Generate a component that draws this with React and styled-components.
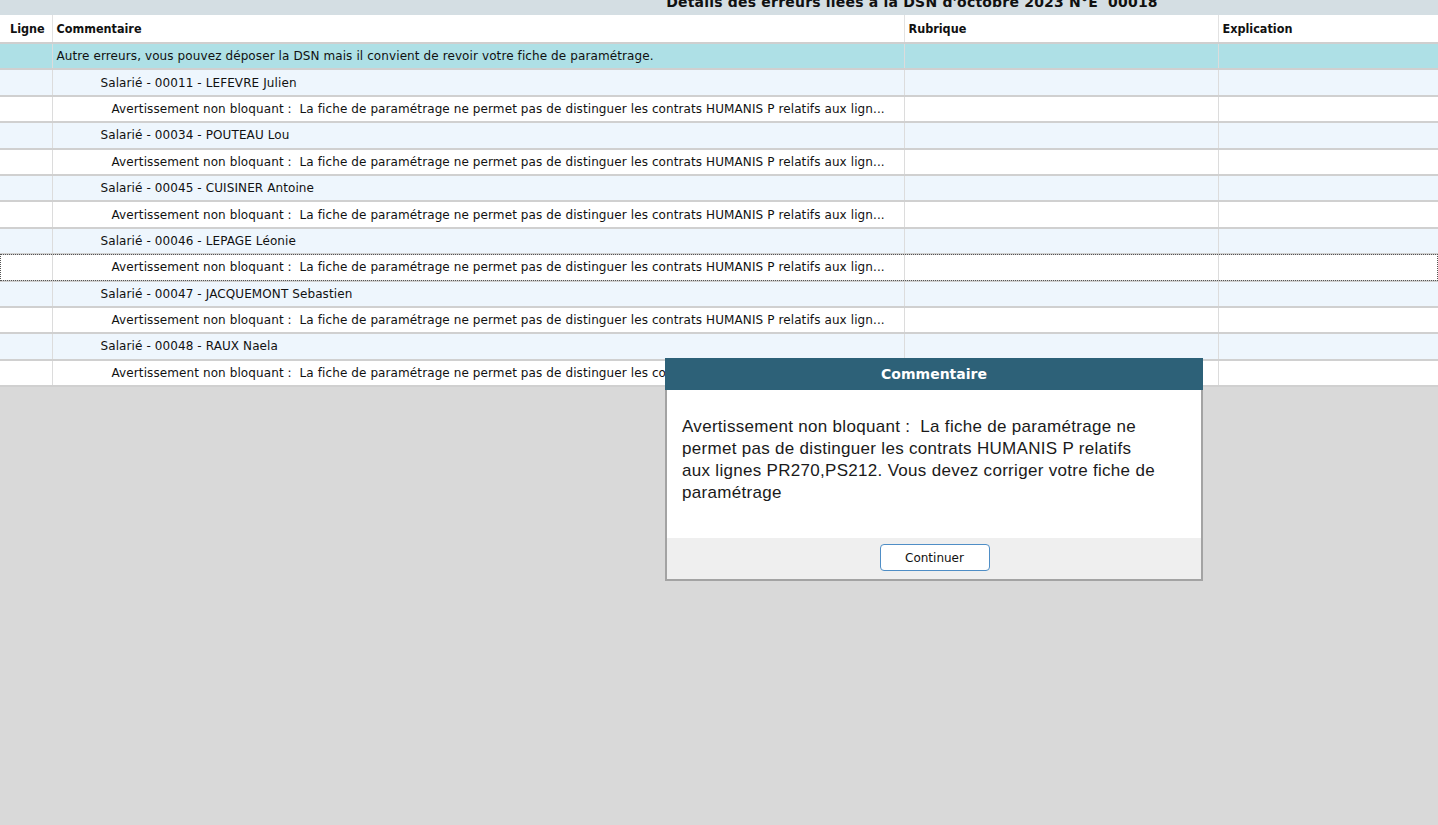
import React from "react"
import styled, { createGlobalStyle } from "styled-components"

const GlobalStyle = createGlobalStyle`
  html, body {
    margin: 0;
    padding: 0;
    background: #d9d9d9;
  }
  body {
    font-family: "DejaVu Sans", sans-serif;
  }
`

const Page = styled.div`
  position: relative;
  width: 1438px;
  height: 825px;
  overflow: hidden;
  background: #d9d9d9;
`

const TitleBar = styled.div`
  height: 15px;
  overflow: hidden;
  background: #d4dee3;
  padding-left: 386px;
  text-align: center;
`

const TitleText = styled.div`
  margin-top: -6px;
  line-height: 17px;
  font-size: 14px;
  font-weight: bold;
  letter-spacing: 0.2px;
  color: #111;
  white-space: pre;
`

const Grid = styled.table`
  width: 100%;
  table-layout: fixed;
  border-collapse: collapse;
  font-size: 12px;
  color: #111;
`

const HeadCell = styled.th`
  height: 27px;
  padding: 0 0 0 ${p => p.$pad || 4}px;
  text-align: left;
  font-weight: bold;
  font-family: "DejaVu Sans Condensed", "DejaVu Sans", sans-serif;
  font-size: 12.5px;
  background: #fff;
  border-bottom: 2px solid #cfcfcf;
  border-right: 1px solid #e2e2e2;
  white-space: nowrap;
  &:last-child { border-right: none; }
`

const Row = styled.tr`
  background: ${p => p.$kind === "group" ? "#aee0e6" : p.$kind === "emp" ? "#eef6fd" : "#ffffff"};
  border-bottom: 2px solid #d0d0d0;
  ${p => p.$focused && `
    outline: 1px dotted #555;
    outline-offset: -1px;
  `}
`

const Cell = styled.td`
  height: 24.4px;
  padding: 0 4px 0 ${p => p.$indent || 4}px;
  border-right: 1px solid #dcdcdc;
  white-space: pre;
  overflow: hidden;
  letter-spacing: 0.1px;
  &:last-child { border-right: none; }
`

const Dialog = styled.div`
  position: absolute;
  left: 665px;
  top: 358px;
  width: 534px;
  display: flex;
  flex-direction: column;
  border: 2px solid #a3a3a3;
  border-top: none;
  background: #fff;
`

const DialogHeader = styled.div`
  height: 32px;
  margin: 0 -2px;
  background: #2d6178;
  color: #fff;
  font-size: 14px;
  font-weight: bold;
  display: flex;
  align-items: center;
  justify-content: center;
`

const DialogBody = styled.div`
  height: 148px;
  box-sizing: border-box;
  padding: 26px 10px 0 15px;
  font-family: "Liberation Sans", Arial, sans-serif;
  font-size: 17px;
  letter-spacing: 0.3px;
  line-height: 22px;
  color: #1a1a1a;
  white-space: nowrap;
`

const DialogFooter = styled.div`
  height: 41px;
  background: #efefef;
  display: flex;
  justify-content: center;
  align-items: flex-start;
  padding-top: 6px;
  box-sizing: border-box;
`

const Button = styled.button`
  width: 110px;
  height: 27px;
  margin-left: 1px;
  background: #fff;
  border: 1px solid #4f8ec6;
  border-radius: 4px;
  font-family: "DejaVu Sans", sans-serif;
  font-size: 12px;
  color: #111;
`

const warning = "Avertissement non bloquant :  La fiche de paramétrage ne permet pas de distinguer les contrats HUMANIS P relatifs aux lign..."

const employees = [
  "Salarié - 00011 - LEFEVRE Julien",
  "Salarié - 00034 - POUTEAU Lou",
  "Salarié - 00045 - CUISINER Antoine",
  "Salarié - 00046 - LEPAGE Léonie",
  "Salarié - 00047 - JACQUEMONT Sebastien",
  "Salarié - 00048 - RAUX Naela",
]

const rows = [
  { kind: "group", text: "Autre erreurs, vous pouvez déposer la DSN mais il convient de revoir votre fiche de paramétrage.", indent: 4 },
  ...employees.flatMap((e, i) => [
    { kind: "emp", text: e, indent: 48 },
    { kind: "warn", text: warning, indent: 59, focused: i === 3 },
  ]),
]

const messageLines = [
  "Avertissement non bloquant :\u00a0 La fiche de paramétrage ne",
  "permet pas de distinguer les contrats HUMANIS P relatifs",
  "aux lignes PR270,PS212. Vous devez corriger votre fiche de",
  "paramétrage",
]

export default function App() {
  return (
    <Page>
      <GlobalStyle />
      <TitleBar>
        <TitleText>Détails des erreurs liées à la DSN d'octobre 2023 N°E  00018</TitleText>
      </TitleBar>
      <Grid>
        <colgroup>
          <col style={{ width: 52 }} />
          <col style={{ width: 852 }} />
          <col style={{ width: 314 }} />
          <col />
        </colgroup>
        <thead>
          <tr>
            <HeadCell $pad={10}>Ligne</HeadCell>
            <HeadCell>Commentaire</HeadCell>
            <HeadCell>Rubrique</HeadCell>
            <HeadCell>Explication</HeadCell>
          </tr>
        </thead>
        <tbody>
          {rows.map((r, i) => (
            <Row key={i} $kind={r.kind} $focused={r.focused}>
              <Cell />
              <Cell $indent={r.indent}>{r.text}</Cell>
              <Cell />
              <Cell />
            </Row>
          ))}
        </tbody>
      </Grid>
      <Dialog>
        <DialogHeader>Commentaire</DialogHeader>
        <DialogBody>
          {messageLines.map((l, i) => (
            <React.Fragment key={i}>{l}{i < messageLines.length - 1 && <br />}</React.Fragment>
          ))}
        </DialogBody>
        <DialogFooter>
          <Button>Continuer</Button>
        </DialogFooter>
      </Dialog>
    </Page>
  )
}
